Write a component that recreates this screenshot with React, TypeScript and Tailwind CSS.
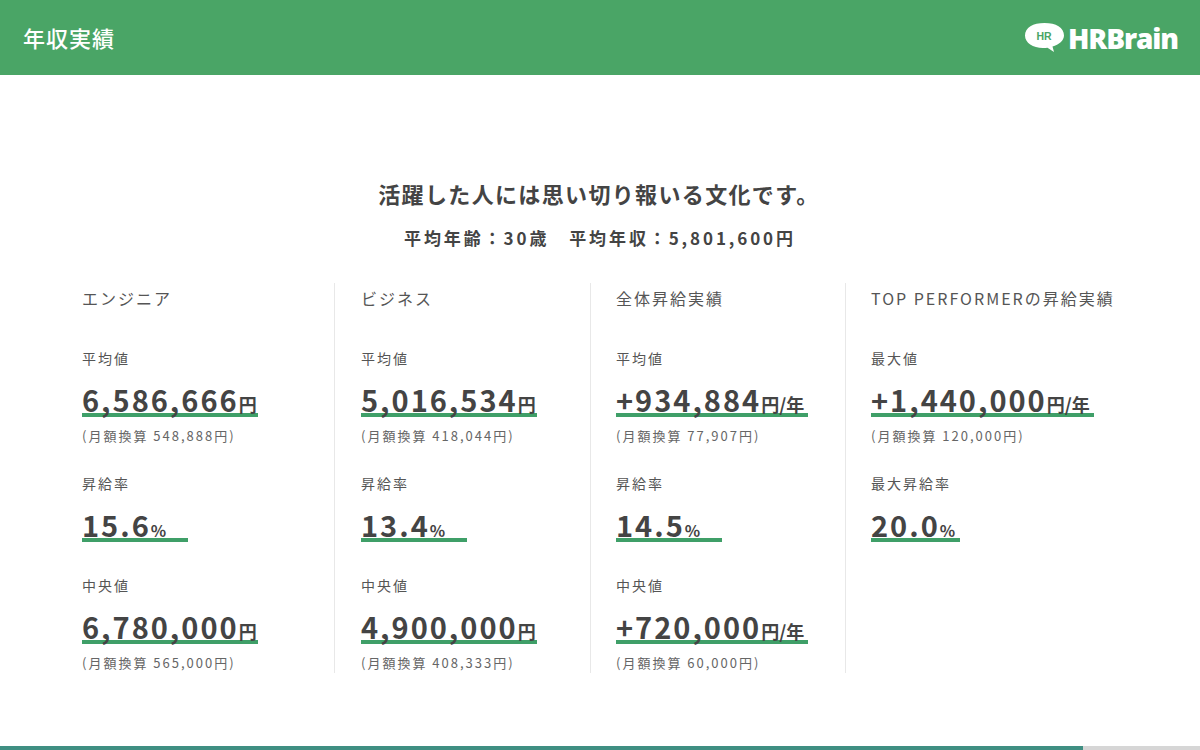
const FONT = "font-['Noto_Sans_CJK_JP','Noto_Sans',sans-serif]";

type Stat = {
  label: string;
  value: string;
  unit: string;
  width: string;
  note?: string;
  gap: string;
};

type Column = { title: string; cls: string; stats: Stat[] };

const COLUMNS: Column[] = [
  {
    title: "エンジニア",
    cls: "w-[252px]",
    stats: [
      { label: "平均値", value: "6,586,666", unit: "円", width: "w-[176px]", note: "(月額換算 548,888円)", gap: "h-[28px]" },
      { label: "昇給率", value: "15.6", unit: "%", width: "w-[106px]", gap: "h-[33px]" },
      { label: "中央値", value: "6,780,000", unit: "円", width: "w-[176px]", note: "(月額換算 565,000円)", gap: "h-0" },
    ],
  },
  {
    title: "ビジネス",
    cls: "w-[256px] border-l border-[#e8e8e8] pl-[26px]",
    stats: [
      { label: "平均値", value: "5,016,534", unit: "円", width: "w-[176px]", note: "(月額換算 418,044円)", gap: "h-[28px]" },
      { label: "昇給率", value: "13.4", unit: "%", width: "w-[106px]", gap: "h-[33px]" },
      { label: "中央値", value: "4,900,000", unit: "円", width: "w-[176px]", note: "(月額換算 408,333円)", gap: "h-0" },
    ],
  },
  {
    title: "全体昇給実績",
    cls: "w-[255px] border-l border-[#e8e8e8] pl-[25px]",
    stats: [
      { label: "平均値", value: "+934,884", unit: "円/年", width: "w-[192px]", note: "(月額換算 77,907円)", gap: "h-[28px]" },
      { label: "昇給率", value: "14.5", unit: "%", width: "w-[106px]", gap: "h-[33px]" },
      { label: "中央値", value: "+720,000", unit: "円/年", width: "w-[192px]", note: "(月額換算 60,000円)", gap: "h-0" },
    ],
  },
  {
    title: "TOP PERFORMERの昇給実績",
    cls: "w-[300px] border-l border-[#e8e8e8] pl-[25px]",
    stats: [
      { label: "最大値", value: "+1,440,000", unit: "円/年", width: "w-[223px]", note: "(月額換算 120,000円)", gap: "h-[28px]" },
      { label: "最大昇給率", value: "20.0", unit: "%", width: "w-[89px]", gap: "h-0" },
    ],
  },
];

function Logo() {
  return (
    <div className="flex items-center gap-[3px]">
      <svg width="41" height="31" viewBox="0 0 41 31">
        <path
          d="M20.500 1C9 1 1 5.500 1 13.500c0 7.500 8 12.500 18 12.500 1.500 0 3 0 4.500-.2L30 30l-1.500-5.500C35 22.500 40 18.500 40 13.500 40 5.500 32 1 20.500 1z"
          fill="#fff"
        />
        <text x="20" y="18" textAnchor="middle" fontSize="10.500" fontWeight="700" fill="#4aa566" fontFamily="Liberation Sans, sans-serif">
          HR
        </text>
      </svg>
      <span className="font-['Open_Sans',sans-serif] text-[28px] font-extrabold leading-none tracking-[-1.1px] text-white">HRBrain</span>
    </div>
  );
}

function StatBlock({ stat }: { stat: Stat }) {
  return (
    <div>
      <div className="text-[14px] leading-[20px] tracking-[2px] text-[#555]">{stat.label}</div>
      <div className={`mt-[12px] h-[37px] whitespace-nowrap border-b-[4px] border-[#3f9f68] ${stat.width}`}>
        <span className="text-[29px] font-bold leading-[38px] tracking-[2px] text-[#444]">{stat.value}</span>
        <span className={`font-bold leading-[38px] text-[#444] ${stat.unit === "%" ? "text-[16px]" : "text-[18px]"}`}>{stat.unit}</span>
      </div>
      {stat.note ? (
        <div className="mt-[10px] text-[13px] leading-[18px] tracking-[2px] text-[#666]">{stat.note}</div>
      ) : null}
      <div className={stat.gap} />
    </div>
  );
}

export default function App() {
  return (
    <div className={`flex h-[750px] w-[1200px] flex-col overflow-hidden bg-white ${FONT}`}>
      <header className="flex h-[75px] shrink-0 items-center justify-between bg-[#4aa566] pl-[23px] pr-[22px]">
        <h1 className="text-[22px] font-medium tracking-[1px] text-white">年収実績</h1>
        <Logo />
      </header>

      <main className="flex-1">
        <h2 className="mt-[102px] pr-[2px] text-center text-[22px] font-bold leading-[32px] tracking-[1.35px] text-[#444]">
          活躍した人には思い切り報いる文化です。
        </h2>
        <p className="mt-[17px] text-center text-[17px] font-bold leading-[24px] tracking-[2.9px] text-[#444]">
          平均年齢：30歳　平均年収：5,801,600円
        </p>

        <div className="mt-[33px] flex h-[390px] pl-[82px]">
          {COLUMNS.map((col) => (
            <section key={col.title} className={col.cls}>
              <div className="mt-[3px] whitespace-nowrap text-[16px] leading-[24px] tracking-[2px] text-[#555]">{col.title}</div>
              <div className="mt-[38px]">
                {col.stats.map((s) => (
                  <StatBlock key={s.label} stat={s} />
                ))}
              </div>
            </section>
          ))}
        </div>
      </main>

      <div className="flex h-[4px] shrink-0 bg-[#d6d6d6]">
        <div className="w-[1083px] bg-[#3f8f82]" />
      </div>
    </div>
  );
}
